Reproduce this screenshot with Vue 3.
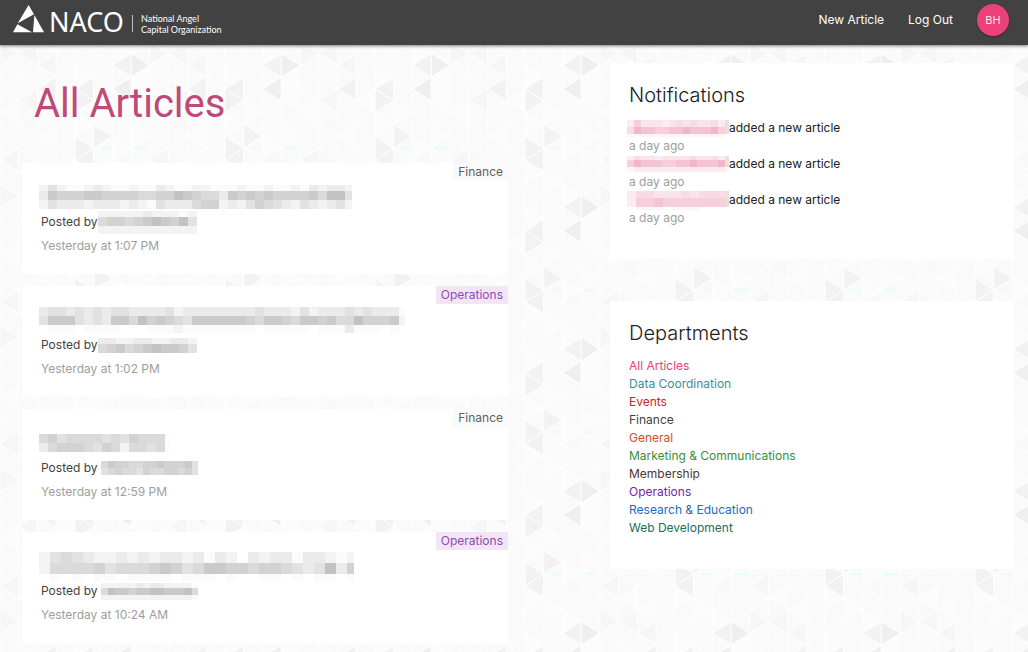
<script setup>
const COL = 18.75
const HALF = 142 / 12
const FILLS = ['#fcfcfc', '#fafafa', '#f9f9f9', '#f6f6f6', '#f2f2f2', '#efefef']

// One row per half step, one digit per column strip of the triangle tiling
const tile = [
  '32114121',
  '10110111',
  '12011011',
  '33111101',
  '11311145',
  '11110110',
  '11414150',
  '13104110',
  '01111011',
  '12110111',
  '11011410',
  '11114101',
]

const triangles = []
for (let c = 0; c < 8; c++) {
  for (let j = -1; j <= 12; j++) {
    const x1 = c * COL
    const x2 = x1 + COL
    const y = j * HALF
    const right = Math.abs(c + j) % 2 === 1
    const points = right
      ? `${x1},${y - HALF} ${x1},${y + HALF} ${x2},${y}`
      : `${x2},${y - HALF} ${x2},${y + HALF} ${x1},${y}`
    triangles.push({ points, fill: FILLS[Number(tile[(j + 12) % 12][c])] })
  }
}

const GREY = ['#ffffff', '#fbfbfb', '#f3f3f3', '#ebebeb', '#e2e2e2', '#dadada', '#d2d2d2', '#cacaca', '#c2c2c2']
const PINK = ['#ffffff', '#fdf6f8', '#fcecf1', '#fae4eb', '#f8dbe4', '#f6cfdb', '#f4c4d3', '#f2b5c9', '#e8dfe3']

function mosaic(cell, heights, rows, palette = GREY, width = 0) {
  const cells = []
  let y = 0
  rows.forEach((row, r) => {
    ;[...row].forEach((d, i) => cells.push({ x: i * cell, y, w: cell, h: heights[r], fill: palette[Number(d)] }))
    y += heights[r]
  })
  return { width: width || rows[0].length * cell, height: y, cells }
}

const articles = [
  {
    dept: 'Finance', tone: 'finance', time: 'Yesterday at 1:07 PM',
    title: mosaic(9, [6, 9, 9], [
      '24211232112113211221112112112132332',
      '37666776666556687655376767666675884',
      '24333233323214333566232465432432342',
    ], GREY, 313),
    by: mosaic(9, [6, 9, 8], ['22222322212', '56656787684', '22222222222'], GREY, 100),
    spaced: false,
  },
  {
    dept: 'Operations', tone: 'operations', time: 'Yesterday at 1:02 PM',
    title: mosaic(9, [9, 9, 8], [
      '34434343443333423333333343332423334343331',
      '47774343775867654777777657765776755866672',
      '01110111100011121111111101111101113111010',
    ], GREY, 366),
    by: mosaic(9, [6, 9], ['33223322332', '56756787764'], GREY, 100),
    spaced: false,
  },
  {
    dept: 'Finance', tone: 'finance', time: 'Yesterday at 12:59 PM',
    title: mosaic(9, [9, 9], ['564555545465551', '356665465255451'], GREY, 130),
    by: mosaic(7, [7, 7], ['57665566766674', '45655465566564'], GREY, 97),
    spaced: true,
  },
  {
    dept: 'Operations', tone: 'operations', time: 'Yesterday at 10:24 AM',
    title: mosaic(11, [11, 11, 7], [
      '24543223232332313203233133212',
      '25555645556764577665665434836',
      '01010110111101110100110101101',
    ], GREY, 315),
    by: mosaic(7, [5, 7, 5], ['22222323322221', '58776778877785', '22222222222221'], GREY, 97),
    spaced: true,
  },
]

const notifications = [
  mosaic(7, [7, 7, 3], ['253332343433428', '476655667666758', '111111111111110'], PINK, 102),
  mosaic(7, [4, 7, 5], ['243323333433428', '576665566766678', '122222222222221'], PINK, 102),
  mosaic(9, [7, 9, 3], ['244333434448', '255655555558', '011101110000'], PINK, 102),
]

const departments = [
  ['All Articles', 'pink'],
  ['Data Coordination', 'cyan'],
  ['Events', 'red'],
  ['Finance', 'grey'],
  ['General', 'orange'],
  ['Marketing & Communications', 'green'],
  ['Membership', 'brown'],
  ['Operations', 'purple'],
  ['Research & Education', 'blue'],
  ['Web Development', 'teal'],
]
</script>

<template>
  <div class="page">
    <svg class="backdrop" aria-hidden="true">
      <defs>
        <pattern id="triangles" width="150" height="142" y="18" patternUnits="userSpaceOnUse">
          <polygon
            v-for="(t, i) in triangles" :key="i" :points="t.points" :fill="t.fill"
            stroke="#fefefe" stroke-width="1"
          />
          <path d="M102 130h9M134 130h13" stroke="#e6fdfd" stroke-width="2" />
        </pattern>
      </defs>
      <rect width="100%" height="100%" fill="url(#triangles)" />
    </svg>

    <header class="topbar">
      <a class="brand" href="#" aria-label="NACO home">
        <svg width="230" height="44" viewBox="0 0 230 44">
          <g fill="#ffffff">
            <path d="M15.600 5 21 14.300 4.800 23.200Z" />
            <path d="M21.400 15 31 32.200H20Z" />
            <path d="M4.400 24.200 19 32.200H0Z" />
            <rect x="119" y="15" width="1" height="17" fill="#bdbdbd" />
            <text class="mark" x="36" y="32">NACO</text>
            <text class="tagline" x="128" y="22">National Angel</text>
            <text class="tagline" x="128" y="33">Capital Organization</text>
          </g>
        </svg>
      </a>
      <nav class="nav">
        <a href="#">New Article</a>
        <a href="#">Log Out</a>
        <button class="avatar" type="button">BH</button>
      </nav>
    </header>

    <main class="columns">
      <section class="feed">
        <h1>All Articles</h1>
        <article v-for="a in articles" :key="a.time" class="card article">
          <span class="tag" :class="a.tone">{{ a.dept }}</span>
          <div class="title">
            <svg :width="a.title.width" :height="a.title.height" shape-rendering="crispEdges" aria-hidden="true">
              <rect v-for="(c, i) in a.title.cells" :key="i" :x="c.x" :y="c.y" :width="c.w" :height="c.h" :fill="c.fill" />
            </svg>
          </div>
          <div class="byline" :class="{ spaced: a.spaced }">
            <span>Posted by</span>
            <svg :width="a.by.width" :height="a.by.height" shape-rendering="crispEdges" aria-hidden="true">
              <rect v-for="(c, i) in a.by.cells" :key="i" :x="c.x" :y="c.y" :width="c.w" :height="c.h" :fill="c.fill" />
            </svg>
          </div>
          <time>{{ a.time }}</time>
        </article>
      </section>

      <aside class="side">
        <section class="card panel">
          <h2>Notifications</h2>
          <ul>
            <li v-for="(n, k) in notifications" :key="k">
              <div class="event">
                <svg :width="n.width" :height="n.height" shape-rendering="crispEdges" aria-hidden="true">
                  <rect v-for="(c, i) in n.cells" :key="i" :x="c.x" :y="c.y" :width="c.w" :height="c.h" :fill="c.fill" />
                </svg>
                <span>added a new article</span>
              </div>
              <div class="ago">a day ago</div>
            </li>
          </ul>
        </section>
        <section class="card panel">
          <h2>Departments</h2>
          <ul>
            <li v-for="[name, tone] in departments" :key="name">
              <a href="#" :class="tone">{{ name }}</a>
            </li>
          </ul>
        </section>
      </aside>
    </main>
  </div>
</template>

<style>
body {
  margin: 0;
  background: #fbfbfb;
}
</style>

<style scoped>
.page {
  position: relative;
  min-height: 100vh;
  font-family: Inter, Roboto, sans-serif;
  font-size: 12px;
  line-height: 18px;
  color: #212121;
}
.backdrop {
  position: absolute;
  inset: 0;
  width: 100%;
  height: 100%;
}
a {
  color: inherit;
  text-decoration: none;
}
.topbar {
  position: relative;
  display: flex;
  justify-content: space-between;
  align-items: flex-start;
  height: 45px;
  box-sizing: border-box;
  padding: 0 19px 0 13px;
  background: #424242;
  box-shadow: 0 1px 3px rgba(0, 0, 0, 0.5);
}
.brand svg {
  display: block;
}
.mark {
  font-family: "Noto Sans", sans-serif;
  font-size: 27px;
}
.tagline {
  font-family: Lato, sans-serif;
  font-size: 9px;
}
.nav {
  display: flex;
  align-items: center;
  gap: 24px;
  height: 40px;
  color: #ffffff;
}
.avatar {
  width: 32px;
  height: 32px;
  padding: 0;
  border: 0;
  border-radius: 50%;
  background: #ec407a;
  color: #fce4ec;
  font: 11px/32px Inter, sans-serif;
  box-shadow: 0 1px 2px rgba(0, 0, 0, 0.3);
}
.columns {
  position: relative;
  display: grid;
  grid-template-columns: 486fr 404fr;
  column-gap: 102px;
  align-items: start;
  padding: 18px 14px 8px 22px;
}
h1 {
  margin: 0 0 30px;
  padding: 16px 12px 4px;
  font-family: Roboto, sans-serif;
  font-size: 40px;
  line-height: 50px;
  font-weight: 400;
  color: #bd4a78;
}
.card {
  background: #ffffff;
}
.article {
  position: relative;
  padding: 21px 19px 16px;
  margin-bottom: 12px;
}
.article:last-child {
  margin-bottom: 0;
}
.tag {
  position: absolute;
  top: 0;
  right: 0;
  padding: 0 5px;
}
.tag.finance {
  background: #fafafa;
  color: #616161;
}
.tag.operations {
  background: #f3e5f5;
  color: #8e4bb5;
}
.title {
  display: flex;
  align-items: center;
  height: 26px;
  margin-left: -2px;
}
.title svg,
.byline svg,
.event svg {
  flex: none;
}
.byline {
  display: flex;
  align-items: center;
  height: 24px;
  color: #424242;
}
.byline.spaced {
  gap: 3px;
}
time {
  display: block;
  line-height: 24px;
  color: #9e9e9e;
}
.side {
  display: grid;
  gap: 42px;
}
.panel {
  padding: 20px 19px 32px;
}
h2 {
  margin: 0 0 12px;
  font-size: 20px;
  line-height: 24px;
  font-weight: 300;
}
ul {
  margin: 0;
  padding: 0;
  list-style: none;
}
.event {
  display: flex;
  align-items: center;
  height: 18px;
  margin-left: -2px;
}
.ago {
  color: #9e9e9e;
}
.pink { color: #ec407a; }
.cyan { color: #3a8f98; }
.red { color: #c62828; }
.grey { color: #424242; }
.orange { color: #d84b30; }
.green { color: #388e3c; }
.brown { color: #4e342e; }
.purple { color: #7128a8; }
.blue { color: #1f69c4; }
.teal { color: #216e5c; }
</style>
